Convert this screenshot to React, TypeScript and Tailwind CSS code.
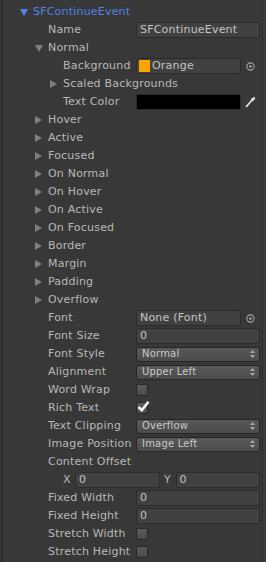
import type { ReactNode } from "react";

// indent per nesting level (text start, counted from the inner panel edge)
const indent: Record<number, string> = {
  0: "pl-[30px]",
  1: "pl-[45px]",
  2: "pl-[60px]",
};

function Arrow({ open, blue }: { open?: boolean; blue?: boolean }) {
  const fill = blue ? "#5282ea" : "#7f7f7f";
  return (
    <span className="-ml-[13px] flex w-[13px] shrink-0 items-center">
      {open ? (
        <svg width="8" height="7" viewBox="0 0 8 7">
          <path d="M0 0 H8 L4 7 Z" fill={fill} />
        </svg>
      ) : (
        <svg width="7" height="8" viewBox="0 0 7 8">
          <path d="M0 0 L7 4 L0 8 Z" fill={fill} />
        </svg>
      )}
    </span>
  );
}

type RowProps = {
  label: string;
  level?: number;
  fold?: "open" | "closed";
  children?: ReactNode;
};

function Row({ label, level = 1, fold, children }: RowProps) {
  return (
    <div className="flex h-[18px] items-center">
      <div className={`flex w-[133px] shrink-0 items-center whitespace-nowrap ${indent[level]}`}>
        {fold && <Arrow open={fold === "open"} />}
        <span className="text-[#b8b8b8]">{label}</span>
      </div>
      <div className="flex flex-1 items-center pr-[2px]">{children}</div>
    </div>
  );
}

function Field({ value, className = "" }: { value: string; className?: string }) {
  return (
    <div
      className={`flex h-[16px] flex-1 items-center overflow-hidden rounded-[2px] border border-[#2b2b2b] bg-[#414141] px-[3px] whitespace-nowrap text-[#c4c4c4] ${className}`}
    >
      {value}
    </div>
  );
}

function Popup({ value }: { value: string }) {
  return (
    <div className="flex h-[15px] flex-1 items-center justify-between rounded-[3px] border border-[#262626] bg-gradient-to-b from-[#595959] to-[#4b4b4b] pl-[5px] pr-[4px] text-[10px] text-[#c8c8c8]">
      <span>{value}</span>
      <svg width="5" height="8" viewBox="0 0 5 8">
        <path d="M0 3 L2.5 0 L5 3 Z M0 5 L2.5 8 L5 5 Z" fill="#a8a8a8" />
      </svg>
    </div>
  );
}

function Check({ on }: { on?: boolean }) {
  return (
    <div className="relative flex h-[12px] w-[12px] items-center justify-center rounded-[2px] border border-[#262626] bg-gradient-to-b from-[#5a5a5a] to-[#4a4a4a]">
      {on && (
        <svg width="13" height="12" viewBox="0 0 13 12" className="absolute -top-[3px] left-[0px]">
          <path d="M1.5 7 L4.8 10.2 L11.5 1.8" fill="none" stroke="#f4f4f4" strokeWidth="2.6" />
        </svg>
      )}
    </div>
  );
}

function Picker() {
  return (
    <span className="flex w-[19px] shrink-0 justify-center">
      <svg width="9" height="9" viewBox="0 0 9 9">
        <circle cx="4.5" cy="4.5" r="3.6" fill="none" stroke="#a6a6a6" strokeWidth="1.1" />
        <circle cx="4.5" cy="4.5" r="1.3" fill="#a6a6a6" />
      </svg>
    </span>
  );
}

function Dropper() {
  return (
    <span className="flex w-[19px] shrink-0 justify-center">
      <svg width="11" height="12" viewBox="0 0 11 12">
        <path d="M1 11 L8 3" stroke="#e8e8e8" strokeWidth="1.6" />
        <path d="M7 2.5 L9 0.8 L10.4 2.2 L8.6 4.2 Z" fill="#e8e8e8" />
        <path d="M6.2 2.6 L8.6 5" stroke="#e8e8e8" strokeWidth="1.2" />
      </svg>
    </span>
  );
}

const closedGroups = [
  "Hover",
  "Active",
  "Focused",
  "On Normal",
  "On Hover",
  "On Active",
  "On Focused",
  "Border",
  "Margin",
  "Padding",
  "Overflow",
];

export default function App() {
  return (
    <div className="flex h-[562px] w-[266px] overflow-hidden bg-[#383838] font-['DejaVu_Sans',sans-serif] text-[11px] leading-[18px] tracking-[0.2px]">
      <div className="w-[3px] shrink-0 border-r border-[#2c2c2c] bg-[#323232]" />
      <div className="flex min-w-0 flex-1 flex-col pt-[3px]">
        {/* component header */}
        <div className="flex h-[18px] items-center pl-[30px]">
          <Arrow open blue />
          <span className="text-[#5282ea]">SFContinueEvent</span>
        </div>

        <Row label="Name">
          <Field value="SFContinueEvent" />
        </Row>
        <Row label="Normal" fold="open" />
        <Row label="Background" level={2}>
          <div className="flex h-[16px] flex-1 items-center rounded-[2px] border border-[#2b2b2b] bg-[#414141] pl-[2px] text-[#c4c4c4]">
            <span className="mr-[2px] h-[12px] w-[11px] bg-[#ffa500]" />
            Orange
          </div>
          <Picker />
        </Row>
        <div className="flex h-[18px] items-center whitespace-nowrap pl-[60px]">
          <Arrow />
          <span className="text-[#b8b8b8]">Scaled Backgrounds</span>
        </div>
        <Row label="Text Color" level={2}>
          <div className="h-[16px] flex-1 border border-[#2b2b2b] bg-black" />
          <Dropper />
        </Row>

        {closedGroups.map((g) => (
          <Row key={g} label={g} fold="closed" />
        ))}

        <Row label="Font">
          <Field value="None (Font)" />
          <Picker />
        </Row>
        <Row label="Font Size">
          <Field value="0" />
        </Row>
        <Row label="Font Style">
          <Popup value="Normal" />
        </Row>
        <Row label="Alignment">
          <Popup value="Upper Left" />
        </Row>
        <Row label="Word Wrap">
          <Check />
        </Row>
        <Row label="Rich Text">
          <Check on />
        </Row>
        <Row label="Text Clipping">
          <Popup value="Overflow" />
        </Row>
        <Row label="Image Position">
          <Popup value="Image Left" />
        </Row>
        <Row label="Content Offset" />
        <div className="flex h-[18px] items-center pl-[60px] pr-[2px]">
          <span className="w-[12px] shrink-0 text-[#b8b8b8]">X</span>
          <Field value="0" />
          <span className="w-[16px] shrink-0 text-center text-[#b8b8b8]">Y</span>
          <Field value="0" />
        </div>
        <Row label="Fixed Width">
          <Field value="0" />
        </Row>
        <Row label="Fixed Height">
          <Field value="0" />
        </Row>
        <Row label="Stretch Width">
          <Check />
        </Row>
        <Row label="Stretch Height">
          <Check />
        </Row>
      </div>
      <div className="w-[4px] shrink-0 border-l border-[#2c2c2c] bg-[#3c3c3c]" />
    </div>
  );
}
